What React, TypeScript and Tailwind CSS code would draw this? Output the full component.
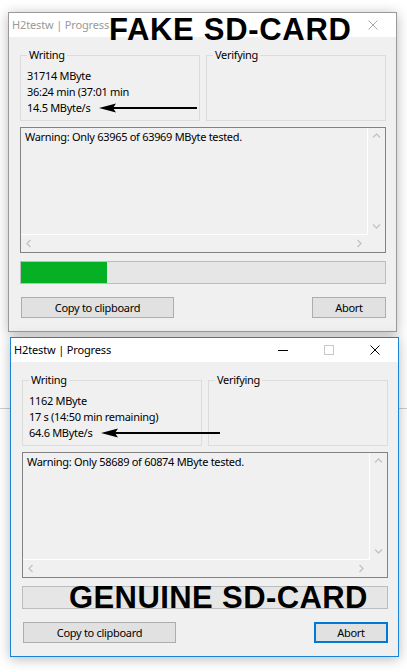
import React from "react";
import clsx from "clsx";

type Props = {
  focused?: boolean;
  lines: string[];
  warning: string;
  progress: number;
  arrowWidth: number;
  stamp?: string;
  barStamp?: string;
};

const Chevron = ({ dir }: { dir: "up" | "down" | "left" | "right" }) => {
  const d = {
    up: "M1 5.5 L4.5 2 L8 5.5",
    down: "M1 2.5 L4.5 6 L8 2.5",
    left: "M5.5 1 L2 4.5 L5.5 8",
    right: "M2.5 1 L6 4.5 L2.5 8",
  }[dir];
  return (
    <div className="w-[17px] h-[17px] flex items-center justify-center">
      <svg width="9" height="9" viewBox="0 0 9 9">
        <path d={d} stroke="#c4c4c4" strokeWidth="1.4" fill="none" />
      </svg>
    </div>
  );
};

const CaptionButton = ({ children }: { children: React.ReactNode }) => (
  <div className="w-[46px] h-full flex items-center justify-center">{children}</div>
);

const GroupBox = ({ title, children }: { title: string; children?: React.ReactNode }) => (
  <fieldset className="w-[180px] h-[74px] border border-[#dcdcdc] pl-[6px] pt-[5px] leading-[16px]">
    <legend className="px-[2px] leading-[16px]">{title}</legend>
    {children}
  </fieldset>
);

const Arrow = ({ width }: { width: number }) => (
  <svg width={width} height="10" viewBox={`0 0 ${width} 10`} className="absolute left-[90px] top-[90px]">
    <path d="M0 5 L17 0.5 L14 5 L17 9.5 Z" fill="#000" />
    <rect x="13" y="4" width={width - 13} height="2" fill="#000" />
  </svg>
);

const ProgressWindow = ({ focused, lines, warning, progress, arrowWidth, stamp, barStamp }: Props) => {
  return (
    <div
      className={clsx(
        "relative w-[389px] h-[320px] border bg-[#f0f0f0] flex flex-col shadow-[0_2px_12px_rgba(0,0,0,0.28)]",
        focused ? "border-[#1883d7]" : "border-[#9a9a9a]"
      )}
    >
      <div className="h-[24px] bg-white flex items-center">
        <span
          className={clsx(
            "flex-1 pl-[3px] text-[11px] tracking-[-0.15px]",
            focused ? "text-black" : "text-[#999999]"
          )}
        >
          H2testw | Progress
        </span>
        {focused && (
          <>
            <CaptionButton>
              <div className="w-[10px] h-px bg-black" />
            </CaptionButton>
            <CaptionButton>
              <div className="w-[10px] h-[10px] border border-[#c8c8c8]" />
            </CaptionButton>
          </>
        )}
        <CaptionButton>
          <svg width="10" height="10" viewBox="0 0 10 10">
            <path
              d="M0.5 0.5 L9.5 9.5 M9.5 0.5 L0.5 9.5"
              stroke={focused ? "#000" : "#a8a8a8"}
              strokeWidth="1"
            />
          </svg>
        </CaptionButton>
      </div>

      <div className="flex-1 pl-[11px] pr-[10px] pt-[10px] flex flex-col text-[11px] tracking-[-0.3px] text-black">
        <div className="flex gap-[6px]">
          <GroupBox title="Writing">
            {lines.map((l) => (
              <div key={l} className="whitespace-nowrap">
                {l}
              </div>
            ))}
          </GroupBox>
          <GroupBox title="Verifying" />
        </div>

        <div className="mt-[6px] h-[126px] border border-[#828282] grid grid-cols-[1fr_17px] grid-rows-[1fr_17px]">
          <div className="border-r border-b border-white pl-[4px] pt-[1px] leading-[16px]">{warning}</div>
          <div className="flex flex-col justify-between">
            <Chevron dir="up" />
            <Chevron dir="down" />
          </div>
          <div className="flex justify-between">
            <Chevron dir="left" />
            <Chevron dir="right" />
          </div>
          <div />
        </div>

        <div className="mt-[8px] h-[23px] border border-[#bcbcbc] bg-[#e6e6e6] flex items-center">
          {progress > 0 && <div className="h-full bg-[#06b025]" style={{ width: progress }} />}
          {barStamp && (
            <span className="pl-[46px] font-['Liberation_Sans',Arial,sans-serif] font-bold text-[31px] leading-none tracking-[0.4px] whitespace-nowrap">
              {barStamp}
            </span>
          )}
        </div>

        <div className="mt-[13px] flex justify-between">
          <button className="ml-px w-[153px] h-[21px] border border-[#adadad] bg-[#e1e1e1] leading-none">
            Copy to clipboard
          </button>
          <button
            className={clsx(
              "w-[74px] h-[21px] bg-[#e1e1e1] leading-none",
              focused ? "border-2 border-[#0078d7]" : "border border-[#adadad]"
            )}
          >
            Abort
          </button>
        </div>
      </div>

      <Arrow width={arrowWidth} />

      {stamp && (
        <span className="absolute left-[100px] top-[5px] font-['Liberation_Sans',Arial,sans-serif] font-bold text-[31px] leading-[24px] tracking-[0.7px] text-black whitespace-nowrap">
          {stamp}
        </span>
      )}
    </div>
  );
};

export default function App() {
  return (
    <div className="w-[407px] h-[672px] overflow-hidden pt-[12px] font-['Noto_Sans','Segoe_UI',sans-serif] bg-[linear-gradient(to_bottom,#ffffff_408px,#cdcdcd_408px,#cdcdcd_409px,#ffffff_409px)]">
      <div className="ml-[8px]">
        <ProgressWindow
          lines={["31714 MByte", "36:24 min (37:01 min", "14.5 MByte/s"]}
          warning="Warning: Only 63965 of 63969 MByte tested."
          progress={86}
          arrowWidth={98}
          stamp="FAKE SD-CARD"
        />
      </div>
      <div className="ml-[10px] mt-[5px]">
        <ProgressWindow
          focused
          lines={["1162 MByte", "17 s (14:50 min remaining)", "64.6 MByte/s"]}
          warning="Warning: Only 58689 of 60874 MByte tested."
          progress={0}
          arrowWidth={119}
          barStamp="GENUINE SD-CARD"
        />
      </div>
    </div>
  );
}
